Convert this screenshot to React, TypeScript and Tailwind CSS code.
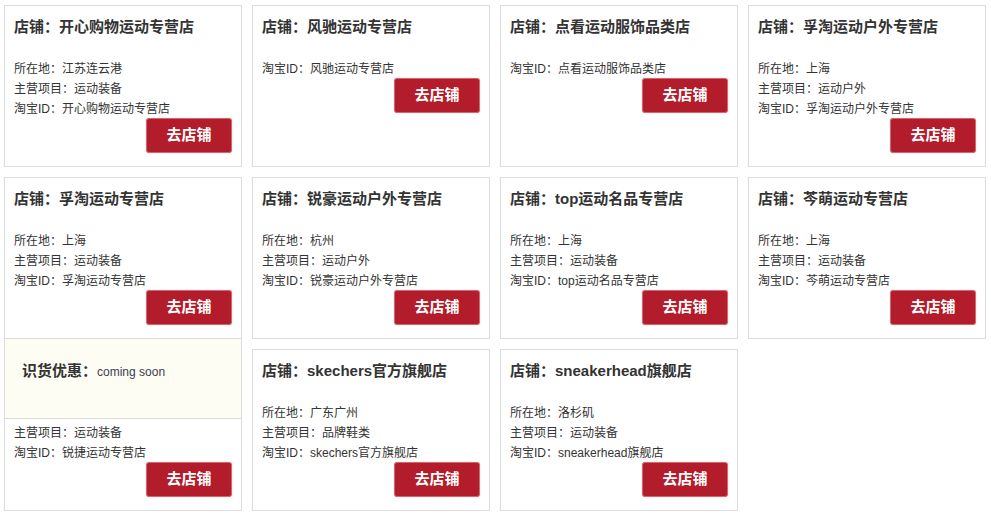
type Shop = {
  name: string;
  city?: string;
  category?: string;
  taobaoId: string;
  promo?: boolean;
};

const shops: Shop[] = [
  { name: "开心购物运动专营店", city: "江苏连云港", category: "运动装备", taobaoId: "开心购物运动专营店" },
  { name: "风驰运动专营店", taobaoId: "风驰运动专营店" },
  { name: "点看运动服饰品类店", taobaoId: "点看运动服饰品类店" },
  { name: "孚淘运动户外专营店", city: "上海", category: "运动户外", taobaoId: "孚淘运动户外专营店" },
  { name: "孚淘运动专营店", city: "上海", category: "运动装备", taobaoId: "孚淘运动专营店" },
  { name: "锐豪运动户外专营店", city: "杭州", category: "运动户外", taobaoId: "锐豪运动户外专营店" },
  { name: "top运动名品专营店", city: "上海", category: "运动装备", taobaoId: "top运动名品专营店" },
  { name: "芩萌运动专营店", city: "上海", category: "运动装备", taobaoId: "芩萌运动专营店" },
  { name: "锐捷运动专营店", city: "上海", category: "运动装备", taobaoId: "锐捷运动专营店", promo: true },
  { name: "skechers官方旗舰店", city: "广东广州", category: "品牌鞋类", taobaoId: "skechers官方旗舰店" },
  { name: "sneakerhead旗舰店", city: "洛杉矶", category: "运动装备", taobaoId: "sneakerhead旗舰店" },
];

const font = { fontFamily: '"Liberation Sans", "Noto Sans CJK SC", sans-serif' };

const ShopCard = ({ shop }: { shop: Shop }) => {
  // the promo popup covers the title and the first line, so those stay empty
  const covered = !!shop.promo;

  return (
    <div className="relative h-[162px] border border-[#dcdcdc] bg-white px-[9px] pt-[11px]">
      {covered ? (
        <div className="h-[20px]" />
      ) : (
        <div className="text-[15px] font-bold leading-[20px] text-[#333]">店铺：{shop.name}</div>
      )}
      <div className="mt-[22px] text-[12px] leading-[20px] text-[#333]">
        {shop.city && (covered ? <div className="h-[20px]" /> : <div>所在地：{shop.city}</div>)}
        {shop.category && <div>主营项目：{shop.category}</div>}
        <div>淘宝ID：{shop.taobaoId}</div>
      </div>
      <div className="-mt-px flex justify-end">
        <a
          href="#"
          className="flex h-[35px] w-[86px] items-center justify-center rounded-[3px] border border-[#d06a72] bg-[#b31c2a] text-[15px] font-bold text-white shadow-[0_0_1px_rgba(180,30,40,0.5)]"
        >
          去店铺
        </a>
      </div>

      {covered && (
        <div className="absolute -left-px top-[-12px] h-[81px] w-[238px] border border-[#dcdcdc] bg-[#fdfdf4] pl-[17px] pt-[22px] leading-[20px]">
          <span className="text-[15px] font-bold text-[#333]">识货优惠：</span>
          <span className="text-[12px] text-[#3c3c50]">coming soon</span>
        </div>
      )}
    </div>
  );
};

export default function App() {
  return (
    <div className="min-h-[519px] w-[991px] bg-white pl-[4px] pt-[5px]" style={font}>
      <div className="grid grid-cols-[repeat(4,238px)] gap-[10px]">
        {shops.map((shop) => (
          <ShopCard key={shop.name} shop={shop} />
        ))}
      </div>
    </div>
  );
}
